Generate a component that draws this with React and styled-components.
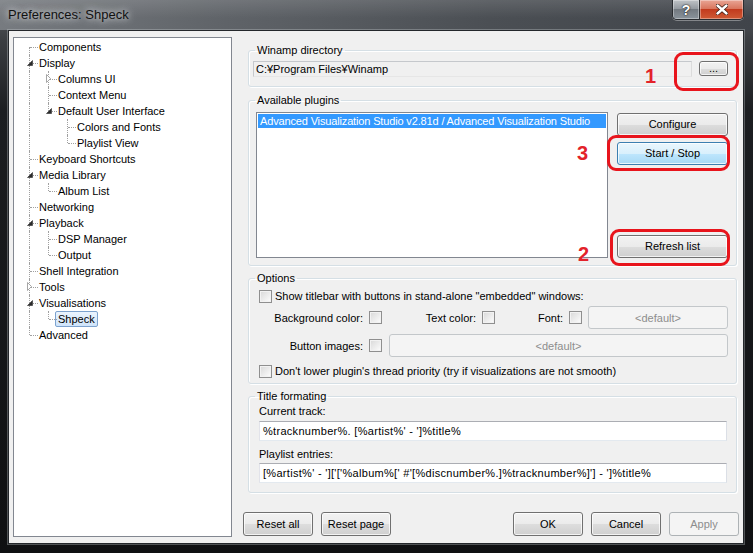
import React from "react";
import styled, { createGlobalStyle } from "styled-components";

const GlobalStyle = createGlobalStyle`
  html, body {
    margin: 0;
    padding: 0;
    background: #0d0e10;
  }
  body {
    font-family: "Liberation Sans", Arial, sans-serif;
    font-size: 11px;
    color: #000;
  }
  * {
    box-sizing: border-box;
  }
`;

const Window = styled.div`
  position: relative;
  width: 753px;
  height: 553px;
  display: flex;
  flex-direction: column;
  overflow: hidden;
  background: linear-gradient(
    180deg,
    #5b5f64 0px,
    #3b3e42 40px,
    #1c1e21 110px,
    #0f1012 100%
  );
`;

const TitleBar = styled.div`
  height: 30px;
  flex: none;
  display: flex;
  align-items: flex-start;
  background: linear-gradient(
      180deg,
      rgba(255, 255, 255, 0.12) 0%,
      rgba(255, 255, 255, 0) 60%
    ),
    linear-gradient(90deg, #777b80 0%, #5f6368 30%, #4b4f54 65%, #40444a 100%);
`;

const Title = styled.div`
  padding: 7px 0 0 8px;
  font-size: 13px;
  line-height: 16px;
  color: #111;
  text-shadow: 0 0 6px rgba(230, 232, 235, 0.9), 0 0 10px rgba(230, 232, 235, 0.7);
`;

const Caption = styled.div`
  margin-left: auto;
  margin-right: 9px;
  display: flex;
  height: 20px;
  border: 1px solid #2a2d31;
  border-top: none;
  border-radius: 0 0 5px 5px;
  overflow: hidden;
  box-shadow: 0 1px 0 rgba(255, 255, 255, 0.35);
`;

const CaptionButton = styled.div`
  width: ${(p) => p.$w}px;
  display: flex;
  align-items: center;
  justify-content: center;
  color: #fff;
  font-weight: bold;
  font-size: 14px;
  text-shadow: 0 0 2px #222, 0 0 1px #000;
  box-shadow: inset 0 0 0 1px rgba(255, 255, 255, 0.35);
  background: ${(p) =>
    p.$close
      ? "linear-gradient(180deg, #e9a595 0%, #d9765e 45%, #c23b1e 50%, #cf5a35 100%)"
      : "linear-gradient(180deg, #bfc3c7 0%, #959ba1 45%, #737a81 50%, #8a939b 100%)"};
  & + & {
    border-left: 1px solid #2a2d31;
  }
`;

const Client = styled.div`
  flex: 1;
  margin: 0 9px 9px 8px;
  border: 1px solid #24272b;
  box-shadow: 0 0 0 1px rgba(200, 205, 210, 0.35);
  background: #f0f0f0;
  display: flex;
  gap: 11px;
  padding: 6px 4px;
  min-height: 0;
`;

/* ---------- tree ---------- */

const Tree = styled.div`
  width: 219px;
  flex: none;
  background: #fff;
  border: 1px solid #828790;
  padding: 1px 0 0 6px;
`;

const Row = styled.div`
  display: flex;
  height: 16px;
  align-items: stretch;
`;

const Cell = styled.div`
  position: relative;
  width: 19px;
  flex: none;

  &::before {
    content: "";
    position: absolute;
    left: 9px;
    top: ${(p) => (p.$up || p.$through ? "0" : "8px")};
    bottom: ${(p) => (p.$down || p.$through ? "0" : "8px")};
    border-left: ${(p) =>
      p.$up || p.$down || p.$through ? "1px dotted #a0a0a0" : "none"};
  }

  &::after {
    content: "";
    position: absolute;
    left: 10px;
    right: 1px;
    top: 8px;
    border-top: ${(p) => (p.$branch ? "1px dotted #a0a0a0" : "none")};
  }
`;

const Glyph = styled.svg`
  position: absolute;
  left: 6px;
  top: 4px;
  z-index: 1;
`;

const Label = styled.span`
  align-self: center;
  margin-left: -3px;
  padding: 0 2px;
  line-height: 14px;
  white-space: nowrap;
  border: 1px solid ${(p) => (p.$selected ? "#7da2ce" : "transparent")};
  border-radius: 2px;
  background: ${(p) =>
    p.$selected ? "linear-gradient(180deg, #ebf4fe 0%, #cfe4fa 100%)" : "none"};
`;

const treeData = [
  { label: "Components" },
  {
    label: "Display",
    open: true,
    children: [
      { label: "Columns UI", closed: true },
      { label: "Context Menu" },
      {
        label: "Default User Interface",
        open: true,
        children: [{ label: "Colors and Fonts" }, { label: "Playlist View" }],
      },
    ],
  },
  { label: "Keyboard Shortcuts" },
  { label: "Media Library", open: true, children: [{ label: "Album List" }] },
  { label: "Networking" },
  {
    label: "Playback",
    open: true,
    children: [{ label: "DSP Manager" }, { label: "Output" }],
  },
  { label: "Shell Integration" },
  { label: "Tools", closed: true },
  {
    label: "Visualisations",
    open: true,
    children: [{ label: "Shpeck", selected: true }],
  },
  { label: "Advanced" },
];

function flatten(nodes, depth = 0, guides = [], out = []) {
  nodes.forEach((n, i) => {
    const last = i === nodes.length - 1;
    out.push({
      ...n,
      depth,
      guides,
      up: !(depth === 0 && i === 0),
      down: !last,
    });
    if (n.children) flatten(n.children, depth + 1, [...guides, !last], out);
  });
  return out;
}

const rows = flatten(treeData);

function Expander({ open }) {
  if (open) {
    return (
      <Glyph width="7" height="8" viewBox="0 0 7 8">
        <path d="M6.5 1.5 L6.5 6.5 L1.5 6.5 Z" fill="#2b2b2b" stroke="#2b2b2b" strokeWidth="0.6" />
      </Glyph>
    );
  }
  return (
    <Glyph width="7" height="9" viewBox="0 0 7 9" style={{ top: 3 }}>
      <path d="M1.5 0.5 L5.5 4.5 L1.5 8.5 Z" fill="#fff" stroke="#a6a6a6" strokeWidth="1" />
    </Glyph>
  );
}

function TreeView() {
  return (
    <Tree>
      {rows.map((r) => (
        <Row key={r.label}>
          {r.guides.map((g, i) => (
            <Cell key={i} $through={g} />
          ))}
          <Cell $up={r.up} $down={r.down} $branch>
            {(r.open || r.closed) && <Expander open={r.open} />}
          </Cell>
          <Label $selected={r.selected}>{r.label}</Label>
        </Row>
      ))}
    </Tree>
  );
}

/* ---------- right side ---------- */

const Side = styled.div`
  flex: 1;
  min-width: 0;
  display: flex;
  flex-direction: column;
`;

const Group = styled.fieldset`
  margin: ${(p) => p.$top}px 2px 0 5px;
  padding: 0;
  height: ${(p) => p.$h}px;
  min-width: 0;
  flex: none;
  border: 1px solid #d5dfe5;
  border-radius: 3px;
  box-shadow: inset 1px 1px 0 #fff, 1px 1px 0 #fff;
`;

const Legend = styled.legend`
  margin-left: 6px;
  padding: 0 2px;
  font-size: 11px;
  line-height: 13px;
`;

const DirRow = styled.div`
  display: flex;
  align-items: flex-start;
  gap: 7px;
  padding: 4px 8px 0 4px;
`;

const ReadOnlyField = styled.div`
  flex: 1;
  height: 16px;
  line-height: 14px;
  padding: 0 2px;
  background: #f0f0f0;
  border: 1px solid #c5c8cc;
  border-right-color: #dcdcdc;
  border-bottom-color: #e6e6e6;
  white-space: nowrap;
`;

const Button = styled.button`
  width: ${(p) => p.$w || 70}px;
  height: ${(p) => p.$h || 23}px;
  flex: none;
  padding: 0;
  font-family: inherit;
  font-size: 11px;
  line-height: 1;
  color: #000;
  border: 1px solid #707070;
  border-radius: 3px;
  background: linear-gradient(180deg, #f2f2f2 0%, #ebebeb 50%, #dddddd 51%, #cfcfcf 100%);
  box-shadow: inset 0 0 0 1px rgba(255, 255, 255, 0.75);

  &[data-hot="true"] {
    border-color: #3c7fb1;
    background: linear-gradient(180deg, #eaf6fd 0%, #d9f0fc 50%, #bee6fd 51%, #a7d9f5 100%);
  }

  &:disabled {
    color: #8d8d8d;
    border-color: #adb2b5;
    background: #f4f4f4;
    box-shadow: none;
  }
`;

const PluginsBody = styled.div`
  display: flex;
  padding: 5px 8px 0 7px;
`;

const ListBox = styled.div`
  width: 352px;
  height: 146px;
  flex: none;
  background: #fff;
  border: 1px solid #828790;
  padding: 1px;
`;

const ListItem = styled.div`
  height: 14px;
  line-height: 14px;
  padding: 0 2px;
  white-space: nowrap;
  overflow: hidden;
  letter-spacing: -0.15px;
  color: ${(p) => (p.$selected ? "#fff" : "#000")};
  background: ${(p) => (p.$selected ? "#3399ff" : "transparent")};
`;

const ButtonColumn = styled.div`
  margin-left: 9px;
  flex: 1;
  display: flex;
  flex-direction: column;
  gap: 6px;
  padding-top: 1px;

  & > :last-child {
    margin-top: auto;
  }
`;

const OptionsBody = styled.div`
  display: flex;
  flex-direction: column;
  padding: 4px 8px 0 10px;
`;

const OptRow = styled.div`
  display: flex;
  align-items: center;
  height: ${(p) => p.$h}px;
  margin-top: ${(p) => p.$mt || 0}px;
  white-space: nowrap;
`;

const Check = styled.span`
  display: inline-block;
  width: 13px;
  height: 13px;
  flex: none;
  margin-left: ${(p) => p.$ml ?? 6}px;
  margin-right: ${(p) => p.$mr ?? 0}px;
  border: 1px solid #8f8f8f;
  background: linear-gradient(135deg, #d8d8d8 0%, #f6f6f6 80%, #ffffff 100%);
  box-shadow: inset 0 0 0 1px #f2f2f2;
`;

const FieldLabel = styled.span`
  width: ${(p) => p.$w}px;
  flex: none;
  text-align: right;
`;

const DefaultBox = styled.div`
  flex: 1;
  height: 23px;
  margin-left: ${(p) => p.$ml}px;
  display: flex;
  align-items: center;
  justify-content: center;
  color: #8d8d8d;
  background: #f4f4f4;
  border: 1px solid #c3c7ca;
  border-radius: 3px;
`;

const TitleBody = styled.div`
  display: flex;
  flex-direction: column;
  padding: 2px 9px 0 10px;
`;

const SmallLabel = styled.div`
  line-height: 13px;
  margin-top: ${(p) => p.$mt || 0}px;
`;

const TextInput = styled.div`
  height: 20px;
  line-height: 18px;
  margin-top: ${(p) => p.$mt || 0}px;
  padding: 0 3px;
  letter-spacing: 0.3px;
  background: #fff;
  border: 1px solid;
  border-color: #abadb3 #dbdfe6 #e3e9ef #e2e3ea;
  white-space: nowrap;
`;

const Footer = styled.div`
  margin-top: auto;
  margin-bottom: 1px;
  display: flex;
  gap: 8px;
`;

const Spacer = styled.div`
  flex: 1;
`;

/* ---------- annotations ---------- */

const Mark = styled.div`
  position: absolute;
  border: 3px solid #e8141c;
  border-radius: 9px;
  pointer-events: none;
`;

const Num = styled.div`
  position: absolute;
  color: #e3222a;
  font-weight: bold;
  font-size: 20px;
  line-height: 20px;
`;

export default function App() {
  return (
    <>
      <GlobalStyle />
      <Window>
        <TitleBar>
          <Title>Preferences: Shpeck</Title>
          <Caption>
            <CaptionButton $w={26}>?</CaptionButton>
            <CaptionButton $w={44} $close>
              <svg width="12" height="11" viewBox="0 0 12 11">
                <path
                  d="M1.5 1.5 L10.5 9.5 M10.5 1.5 L1.5 9.5"
                  stroke="#3a1a12"
                  strokeWidth="4"
                  strokeLinecap="round"
                />
                <path
                  d="M1.5 1.5 L10.5 9.5 M10.5 1.5 L1.5 9.5"
                  stroke="#fff"
                  strokeWidth="2.4"
                  strokeLinecap="round"
                />
              </svg>
            </CaptionButton>
          </Caption>
        </TitleBar>

        <Client>
          <TreeView />

          <Side>
            <Group $top={7} $h={43}>
              <Legend>Winamp directory</Legend>
              <DirRow>
                <ReadOnlyField>C:¥Program Files¥Winamp</ReadOnlyField>
                <Button $w={29} $h={15}>...</Button>
              </DirRow>
            </Group>

            <Group $top={7} $h={172}>
              <Legend>Available plugins</Legend>
              <PluginsBody>
                <ListBox>
                  <ListItem $selected>
                    Advanced Visualization Studio v2.81d / Advanced Visualization Studio
                  </ListItem>
                </ListBox>
                <ButtonColumn>
                  <Button $w={111}>Configure</Button>
                  <Button $w={111} data-hot="true">
                    Start / Stop
                  </Button>
                  <Button $w={111}>Refresh list</Button>
                </ButtonColumn>
              </PluginsBody>
            </Group>

            <Group $top={6} $h={112}>
              <Legend>Options</Legend>
              <OptionsBody>
                <OptRow $h={14}>
                  <Check $ml={0} $mr={3} />
                  Show titlebar with buttons in stand-alone "embedded" windows:
                </OptRow>
                <OptRow $h={23} $mt={3}>
                  <FieldLabel $w={104}>Background color:</FieldLabel>
                  <Check />
                  <FieldLabel $w={94}>Text color:</FieldLabel>
                  <Check />
                  <FieldLabel $w={68}>Font:</FieldLabel>
                  <Check />
                  <DefaultBox $ml={6}>&lt;default&gt;</DefaultBox>
                </OptRow>
                <OptRow $h={23} $mt={5}>
                  <FieldLabel $w={104}>Button images:</FieldLabel>
                  <Check />
                  <DefaultBox $ml={7}>&lt;default&gt;</DefaultBox>
                </OptRow>
                <OptRow $h={14} $mt={7}>
                  <Check $ml={0} $mr={3} />
                  Don't lower plugin's thread priority (try if visualizations are not smooth)
                </OptRow>
              </OptionsBody>
            </Group>

            <Group $top={6} $h={103}>
              <Legend>Title formating</Legend>
              <TitleBody>
                <SmallLabel>Current track:</SmallLabel>
                <TextInput $mt={3}>%tracknumber%. [%artist%' - ']%title%</TextInput>
                <SmallLabel $mt={7}>Playlist entries:</SmallLabel>
                <TextInput $mt={2}>
                  [%artist%' - ']['['%album%[' #'[%discnumber%.]%tracknumber%]'] - ']%title%
                </TextInput>
              </TitleBody>
            </Group>

            <Footer>
              <Button $h={24}>Reset all</Button>
              <Button $h={24}>Reset page</Button>
              <Spacer />
              <Button $h={24}>OK</Button>
              <Button $h={24}>Cancel</Button>
              <Button $h={24} disabled>
                Apply
              </Button>
            </Footer>
          </Side>
        </Client>

        <Mark style={{ left: 674, top: 52, width: 65, height: 39 }} />
        <Mark style={{ left: 607, top: 135, width: 123, height: 36 }} />
        <Mark style={{ left: 610, top: 229, width: 120, height: 37 }} />
        <Num style={{ left: 645, top: 66 }}>1</Num>
        <Num style={{ left: 577, top: 143 }}>3</Num>
        <Num style={{ left: 578, top: 244 }}>2</Num>
      </Window>
    </>
  );
}
